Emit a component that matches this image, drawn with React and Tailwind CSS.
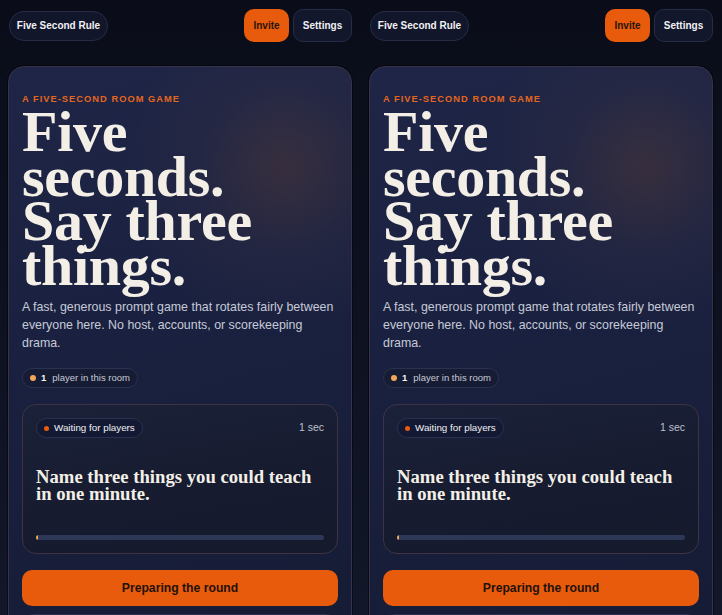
import React from "react";

const sans = { fontFamily: "'Liberation Sans', Arial, sans-serif" };
const serif = { fontFamily: "'Liberation Serif', 'DejaVu Serif', serif" };

function Panel() {
  return (
    <div
      className="w-[361px] h-[615px] shrink-0 overflow-hidden pl-2 pr-[9px] pt-[9px] bg-[linear-gradient(180deg,#0a0d19_0%,#0d1120_50%,#121729_100%)]"
      style={sans}
    >
      <header className="flex items-center justify-between pl-[1px]">
        <div className="h-[30px] w-[99px] rounded-full border border-[#262c45] bg-[#11162a] flex items-center justify-center text-[10px] font-bold text-[#f1f1f4]">
          Five Second Rule
        </div>
        <div className="flex items-center gap-1">
          <button className="h-[33px] w-[45px] rounded-[10px] bg-[#e85b0c] text-[10px] font-bold text-[#2a1407] flex items-center justify-center">
            Invite
          </button>
          <button className="h-[33px] w-[59px] rounded-[10px] border border-[#262c45] bg-[#12172b] text-[10px] font-bold text-[#f1f1f4] flex items-center justify-center">
            Settings
          </button>
        </div>
      </header>

      <section className="mt-6 rounded-[16px] border border-[#38324a] shadow-[0_0_0_1px_rgba(0,0,0,0.45)] px-[13px] pt-[25px] pb-6 bg-[radial-gradient(circle_at_276px_100px,rgba(200,110,40,0.16)_0px,rgba(140,90,70,0.08)_80px,rgba(40,40,60,0)_165px),linear-gradient(165deg,#1e2546_0%,#1a2140_40%,#151b33_100%)]">
        <div className="text-[9.3px] leading-[14px] font-bold tracking-[0.11em] text-[#e5661f]">
          A FIVE-SECOND ROOM GAME
        </div>
        <h1
          className="mt-[4px] text-[58px] leading-[44.5px] font-bold tracking-[-0.005em] text-[#f3efe6]"
          style={serif}
        >
          Five
          <br />
          seconds.
          <br />
          Say three
          <br />
          things.
        </h1>
        <p className="mt-[10px] text-[12.4px] leading-[18px] text-[#c6cad7]">
          A fast, generous prompt game that rotates fairly between everyone here. No host, accounts, or scorekeeping drama.
        </p>

        <div className="mt-4 inline-flex h-[20px] items-center rounded-full border border-[#2a3150] bg-[#161c34] pl-[7px] pr-[7px] text-[9.5px]">
          <span className="h-[6px] w-[6px] rounded-full bg-[#f4a65b]" />
          <span className="ml-[5px] font-bold text-[#f3f3f5]">1</span>
          <span className="ml-[6px] text-[#c6cad7]">player in this room</span>
        </div>

        <div className="mt-4 rounded-[14px] border border-[#3d3344] p-[13px] bg-[linear-gradient(170deg,#1b2138_0%,#161b2f_60%,#151a2d_100%)]">
          <div className="flex items-center justify-between">
            <div className="inline-flex h-[20px] items-center rounded-full border border-[#2a3150] bg-[#131932] pl-[7px] pr-[7px] text-[9.8px] text-[#f1f1f4]">
              <span className="h-[5px] w-[5px] rounded-full bg-[#ea5b0c]" />
              <span className="ml-[5px]">Waiting for players</span>
            </div>
            <span className="text-[10.5px] text-[#bcc0cd]">1 sec</span>
          </div>
          <div
            className="mt-[30px] text-[18.7px] leading-[17px] font-bold text-[#f3efe6]"
            style={serif}
          >
            Name three things you could teach in one minute.
          </div>
          <div className="mt-[33px] h-[5px] rounded-full bg-[#2d3858] overflow-hidden">
            <div className="h-full w-[2px] rounded-full bg-[#f4a65b]" />
          </div>
        </div>

        <button className="mt-4 h-[36px] w-full rounded-[10px] bg-[#e85b0c] text-[12.2px] font-bold text-[#1f1209]">
          Preparing the round
        </button>

        <div className="mt-2 h-[60px] rounded-[12px] border border-[#2a3150] bg-[#161c34]" />
      </section>
    </div>
  );
}

export default function App() {
  return (
    <div className="flex w-[722px] h-[615px] overflow-hidden bg-[#0a0d19]">
      <Panel />
      <Panel />
    </div>
  );
}
